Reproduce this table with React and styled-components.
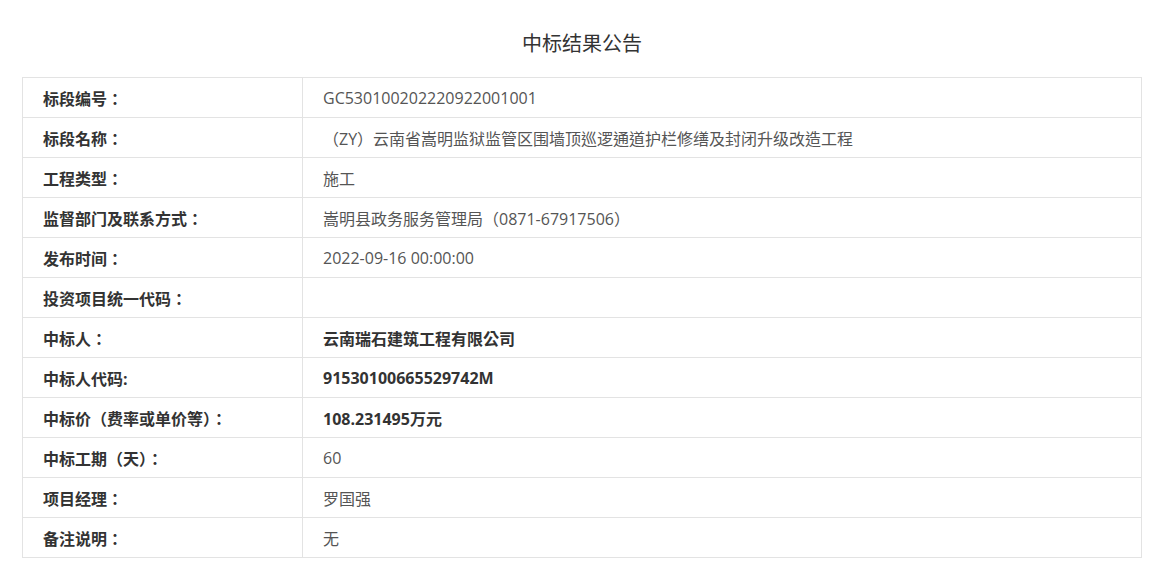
import React from "react";
import styled, { createGlobalStyle } from "styled-components";

const GlobalStyle = createGlobalStyle`
  body {
    margin: 0;
    background: #fff;
    font-family: "Open Sans", "Noto Sans CJK TC", "Noto Sans CJK SC", sans-serif;
  }
`;

const Wrapper = styled.div`
  width: 1120px;
  padding: 30px 22px 28px;
`;

const Title = styled.h2`
  margin: 0 0 19px;

  font-family: "Open Sans", "Noto Sans CJK SC", sans-serif;
  font-size: 20px;
  font-weight: normal;
  line-height: 28px;
  text-align: center;
  color: #333;
`;

const Table = styled.table`
  width: 100%;
  border-collapse: collapse;
  table-layout: fixed;
`;

const Row = styled.tr`
  height: 40px;
`;

const Label = styled.td`
  width: 259px;
  padding: 0 0 0 20px;
  border: 1px solid #e3e3e3;

  font-size: 16px;
  font-weight: bold;
  color: #333;
`;

const Value = styled.td`
  padding: 0 0 0 20px;
  border: 1px solid #e3e3e3;

  font-size: 16px;
  font-weight: ${(props) => (props.bold ? "bold" : "normal")};
  color: ${(props) => (props.bold ? "#333" : "#555")};
`;

const rows = [
  { label: "标段编号：", value: "GC530100202220922001001" },
  {
    label: "标段名称：",
    value: "（ZY）云南省嵩明监狱监管区围墙顶巡逻通道护栏修缮及封闭升级改造工程",
  },
  { label: "工程类型：", value: "施工" },
  { label: "监督部门及联系方式：", value: "嵩明县政务服务管理局（0871-67917506）" },
  { label: "发布时间：", value: "2022-09-16 00:00:00" },
  { label: "投资项目统一代码：", value: "" },
  { label: "中标人：", value: "云南瑞石建筑工程有限公司", bold: true },
  { label: "中标人代码:", value: "91530100665529742M", bold: true },
  { label: "中标价（费率或单价等）：", value: "108.231495万元", bold: true },
  { label: "中标工期（天）：", value: "60" },
  { label: "项目经理：", value: "罗国强" },
  { label: "备注说明：", value: "无" },
];

const App = () => {
  return (
    <>
      <GlobalStyle />
      <Wrapper>
        <Title>中标结果公告</Title>
        <Table>
          <tbody>
            {rows.map((row) => (
              <Row key={row.label}>
                <Label>{row.label}</Label>
                <Value bold={row.bold}>{row.value}</Value>
              </Row>
            ))}
          </tbody>
        </Table>
      </Wrapper>
    </>
  );
};

export default App;
